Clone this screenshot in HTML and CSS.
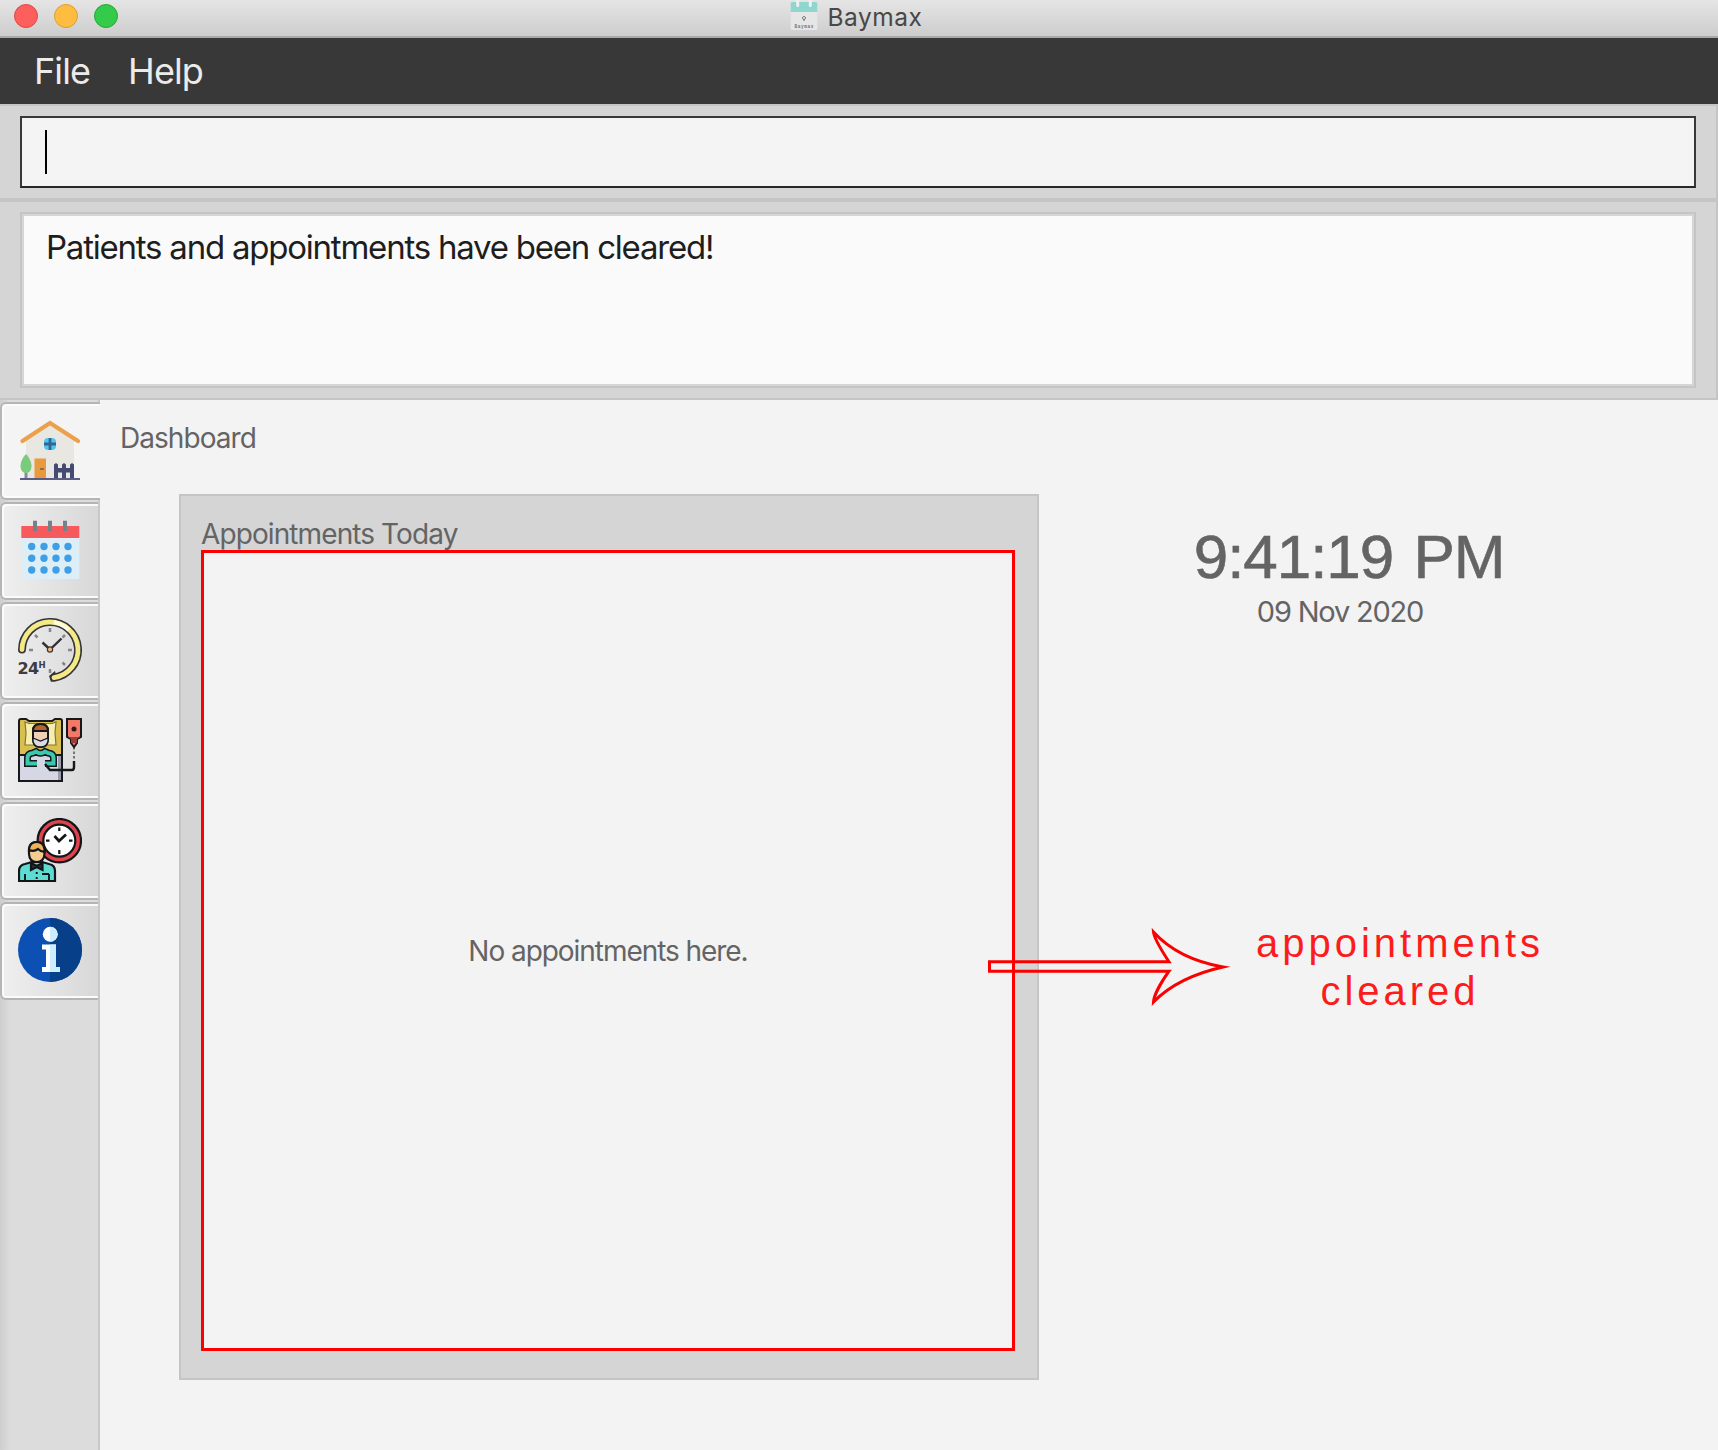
FILE: index.html
```html
<!DOCTYPE html>
<html lang="en">
<head>
<meta charset="utf-8">
<title>Baymax</title>
<link rel="stylesheet" href="styles.css">
</head>
<body>
<div class="window">
  <header class="titlebar">
    <div class="lights"><i class="light close"></i><i class="light minimize"></i><i class="light zoom"></i></div>
    <div class="title">
      <svg class="app-icon" width="28" height="30" viewBox="0 0 28 30">
        <rect x=".7" y="2" width="26.6" height="28" rx="1.5" fill="#e6e6e6"/>
        <path d="M.7 12V3.500Q.7 2 2.200 2H25.800Q27.300 2 27.300 3.500V12z" fill="#8fd6cf"/>
        <path d="M7.700 0V5.500M20.300 0V5.500" stroke="#efefef" stroke-width="3" stroke-linecap="round"/>
        <path d="M14 16.500a1.500 1.500 0 1 1-.1 0M14 19v2" stroke="#666" fill="none"/>
        <text x="14" y="27.500" text-anchor="middle" textLength="19" class="app-icon-text">Baymax</text>
      </svg>
      <span class="title-text">Baymax</span>
    </div>
  </header>
  <nav class="menubar"><span>File</span><span>Help</span></nav>
  <section class="command"><div class="field"><i class="caret"></i></div></section>
  <section class="result"><div class="output">Patients and appointments have been cleared!</div></section>
  <main class="content">
    <aside class="tabs">
      <div class="tab active">
        <svg width="64" height="64" viewBox="0 0 64 64">
          <path d="M8 22L32 6L56 22V60H8z" fill="#e9e7e1"/>
          <path d="M4.500 23L32 5L60 23" fill="none" stroke="#eba14b" stroke-width="4.200" stroke-linecap="round"/>
          <rect x="26" y="20" width="12" height="12" rx="4" fill="#4fc6f2"/>
          <path d="M32 20V32M26 26H38" stroke="#34668f" stroke-width="2.800"/>
          <rect x="16.500" y="40.500" width="11.500" height="20" fill="#e99a3c"/>
          <path d="M22 51H26" stroke="#7a6a58" stroke-width="1.800"/>
          <path d="M8 52V60" stroke="#8a8a9a" stroke-width="3"/>
          <path d="M8 36C11 39 13.500 44 13.500 48C13.500 52.500 11 55 8 55S2.500 52.500 2.500 48C2.500 44 5 39 8 36z" fill="#7acb7c"/>
          <path d="M36 60V46.500L38 45L40 46.500V50H44V46.500L46 45L48 46.500V50H52V46.500L54 45L56 46.500V60H52V54.500H48V60H44V54.500H40V60z" fill="#454a73"/>
          <path d="M2 61H62" stroke="#5a5c86" stroke-width="2"/>
        </svg>
      </div>
      <div class="tab">
        <svg width="64" height="64" viewBox="0 0 64 64">
          <rect x="3.300" y="18" width="58" height="43" rx="1.500" fill="#deeef6"/>
          <rect x="3.300" y="8" width="58" height="12" fill="#f75a5d"/>
          <path d="M17 2.800V13M32 2.800V13M47 2.800V13" stroke="#74808a" stroke-width="4"/>
          <g fill="#3f9fe6"><circle cx="13.700" cy="28.500" r="3.700"/><circle cx="26" cy="28.500" r="3.700"/><circle cx="38" cy="28.500" r="3.700"/><circle cx="50" cy="28.500" r="3.700"/><circle cx="13.700" cy="40.300" r="3.700"/><circle cx="26" cy="40.300" r="3.700"/><circle cx="38" cy="40.300" r="3.700"/><circle cx="50" cy="40.300" r="3.700"/><circle cx="13.700" cy="52" r="3.700"/><circle cx="26" cy="52" r="3.700"/><circle cx="38" cy="52" r="3.700"/><circle cx="50" cy="52" r="3.700"/></g>
        </svg>
      </div>
      <div class="tab">
        <svg width="64" height="64" viewBox="0 0 64 64" fill="none">
          <path d="M4 31.500A28 28 0 1 1 36 59.700" stroke="#34343a" stroke-width="8" stroke-linecap="round"/>
          <path d="M37 53L31 58L33 64L39 61z" fill="#34343a"/>
          <path d="M4 31.500A28 28 0 1 1 36 59.700" stroke="#f3ea86" stroke-width="4.800" stroke-linecap="round"/>
          <path d="M36 4.200A28 28 0 0 1 51 12" stroke="#fffde0" stroke-width="4"/>
          <path d="M32 10V14M50 32H54M11 32H15M17 17L19.500 19.500M47 17L44.500 19.500M47 47L44.500 44.500M32 51V55" stroke="#85858a" stroke-width="2.500"/>
          <path d="M24.500 24.500L32 31.500L43.500 20.500" stroke="#303035" stroke-width="2.400"/>
          <circle cx="32" cy="31.500" r="2.600" fill="#efb98a" stroke="#40352f" stroke-width="1.200"/>
          <text x="-.5" y="55.500" class="hours">24<tspan class="hours-unit" dy="-5.500">H</tspan></text>
        </svg>
      </div>
      <div class="tab">
        <svg width="64" height="64" viewBox="0 0 64 64" fill="none" stroke="#17181c" stroke-width="2">
          <path d="M1 37V3Q1 1 3 1H8L11 3H34L37 1H42Q44 1 44 3V37z" fill="#d9c04e"/>
          <path d="M7 4L11 5.500H34L38 4L37 15L38 27H7L8 15z" fill="#f6eeb0" stroke="#827638" stroke-width="1.200"/>
          <path d="M1 37H44V63H1z" fill="#d5d8e4"/>
          <path d="M40 38H43V62H40z" fill="#989cab" stroke="none"/>
          <path d="M15 13Q15 6 22.500 6T30 13V21Q30 29 22.500 29T15 21z" fill="#eed1b4"/>
          <path d="M15 13Q15 6 22.500 6T30 13z" fill="#b66333"/>
          <path d="M15 20L22.500 23L30 20V23Q29 29 22.500 29T15 23z" fill="#d9dce4" stroke-width="1.300"/>
          <path d="M19 45.500H9.500V40Q9.500 35.500 15 35L18 33.500Q22.500 37 27 33.500L30 35Q35.500 35.500 35.500 40V45.500H27" stroke-width="7"/>
          <path d="M19 45.500H9.500V40Q9.500 35.500 15 35L18 33.500Q22.500 37 27 33.500L30 35Q35.500 35.500 35.500 40V45.500H27" stroke="#3bc8ac" stroke-width="4"/>
          <path d="M27 46L32 52H54Q56 52 56 49V43" stroke-width="2.400"/>
          <path d="M56 29V42" stroke-dasharray="2.500 2" stroke="#73747a"/>
          <path d="M49 1H63V19L59 21V25L56 29L53 25V21L49 19z" fill="#f27868"/>
          <path d="M50 19H62L59 21V25H53V21z" fill="#9b3b3a" stroke="none"/>
          <circle cx="56" cy="11" r="2.500" fill="#32191b" stroke="none"/>
        </svg>
      </div>
      <div class="tab">
        <svg width="64" height="64" viewBox="0 0 64 64" fill="none" stroke="#141518" stroke-width="2.200">
          <circle cx="41.300" cy="22.700" r="21.700" fill="#dd444c"/>
          <circle cx="41.300" cy="22.700" r="16" fill="#fff"/>
          <path d="M41.300 9.500V13M41.300 32V36M28 22.700H31.500M51 22.700H54.500"/>
          <path d="M36.500 18L41 23L48 16.500" stroke-width="2.700"/>
          <path d="M1 63V53Q1 47 7 46L14 44H24L31 46Q37 47 37 53V63z" fill="#5cdcd2"/>
          <path d="M11 32Q11 24 18.700 24T26.500 32V36Q26 44 18.700 44T11 36z" fill="#f4cc91"/>
          <path d="M11 34V31Q12 24 18.700 24T26.500 31V34Q23 34 20 31Q16 34 11 32z" fill="#edb45c"/>
          <path d="M13 45L18.700 48L24.500 45V52L18.700 49L13 52z" fill="#26313a"/>
          <path d="M7 56V63M31 56V63M18.700 54V56M18.700 59V61M24 56H31" stroke-width="1.900"/>
        </svg>
      </div>
      <div class="tab">
        <svg width="64" height="64" viewBox="0 0 64 64">
          <circle cx="32" cy="32" r="32" fill="#0b50b2"/><path d="M32 0A32 32 0 0 1 32 64z" fill="#073f88"/>
          <circle cx="32.300" cy="16.300" r="7.500" fill="#fff"/><path d="M32 8.800A7.500 7.500 0 0 1 32 23.800z" fill="#cdeefe"/>
          <path d="M24 26.500H38V49H42V54H24V49H28V31.500H24z" fill="#fff"/><path d="M32 26.500H38V49H42V54H32z" fill="#cdeefe"/>
        </svg>
      </div>
    </aside>
    <div class="dashboard">
      <h1 class="heading">Dashboard</h1>
      <div class="columns">
        <section class="panel">
          <h2 class="panel-title">Appointments Today</h2>
          <div class="list">No appointments here.</div>
        </section>
        <section class="side">
          <div class="time">9:41:19 PM</div>
          <div class="date">09 Nov 2020</div>
          <p class="note">appointments<br>cleared</p>
        </section>
      </div>
      <svg class="arrow" width="246" height="80" viewBox="0 0 246 80" fill="none" stroke="#fa0000" stroke-width="3">
        <path d="M2.500 33.800H182C175 23 167 11 166.500 4Q191 31 236 39Q191 49 166.500 74C167 67 175 53 182 43.200H2.500z" stroke-miterlimit="8"/>
      </svg>
    </div>
  </main>
</div>
</body>
</html>
```
FILE: styles.css
```css
* { box-sizing: border-box; }
body { margin: 0; font-family: Inter, "Liberation Sans", sans-serif; color: #646464; }
.window { width: 1718px; height: 1450px; display: flex; flex-direction: column; overflow: hidden; background: #f3f3f3; }
.titlebar { height: 38px; flex: none; display: grid; grid-template-columns: 1fr auto 1fr; padding: 0 20px 0 14px; background: linear-gradient(#e5e5e5, #cdcdcd); border-bottom: 2px solid #a9a9a9; }
.lights { display: flex; gap: 16px; padding-top: 4px; }
.light { width: 24px; height: 24px; border-radius: 50%; }
.close { background: #fd605c; border: 1px solid #df4744; }
.minimize { background: #febd40; border: 1px solid #dd9f34; }
.zoom { background: #34cb4b; border: 1px solid #24a934; }
.title { display: flex; gap: 10px; }
.title-text { font-size: 24.500px; line-height: 35px; letter-spacing: .5px; color: #484848; }
.app-icon-text { font: bold 4.500px "Liberation Mono", monospace; fill: #777; }
.menubar { height: 66px; flex: none; display: flex; gap: 38px; padding-left: 34px; background: #383838; color: #ebebeb; font-size: 36px; line-height: 66px; letter-spacing: -.9px; }
.command { height: 96px; flex: none; padding: 10px 20px; background: #d5d5d5; border: 2px solid #c5c5c5; border-left: 0; }
.field { height: 72px; border: 2px solid #383838; border-bottom-color: #272727; background: #f4f4f4; padding: 12px 23px; }
.caret { display: block; width: 2px; height: 44px; background: #000; }
.result { height: 200px; flex: none; padding: 10px 20px; background: #d5d5d5; border: 2px solid #c5c5c5; border-left: 0; }
.output { height: 176px; border: 2px solid #c5c5c5; background: #fafafa; box-shadow: inset 0 0 0 2px #d5d5d5; padding: 13px 24px; font-size: 33px; line-height: 40px; letter-spacing: -1.220px; color: #1e1e1e; }
.command, .result, .field, .output { border-right-width: 2px; }
.command, .result { padding-right: 20px; }
.content { flex: 1; display: flex; }
.tabs { width: 100px; flex: none; padding-top: 2px; display: flex; flex-direction: column; gap: 2px; border-right: 2px solid #c8c8c8; background: linear-gradient(90deg, #cecece, #dcdcdc 10px); }
.tab { height: 98px; flex: none; padding: 14px 0 0 16px; border: 2px solid #b5b5b5; border-right: 0; border-radius: 6px 0 0 6px; background: linear-gradient(90deg, #efefef, #d8d8d8); box-shadow: inset 2px 2px 0 #fbfbfb, inset 0 -2px 0 #fbfbfb; }
.tab.active { margin-right: -2px; background: #f4f4f4; }
.tab svg { display: block; }
.hours { font: bold 16px "DejaVu Sans", sans-serif; fill: #3c3c42; letter-spacing: -.6px; }
.hours-unit { font-size: 8.500px; letter-spacing: 0; }
.dashboard { flex: 1; position: relative; }
.heading { margin: 0; height: 94px; padding: 18px 0 0 20px; font-size: 28px; line-height: 40px; font-weight: 400; letter-spacing: -.950px; }
.columns { display: flex; padding-left: 79px; }
.panel { width: 860px; height: 886px; flex: none; background: #d5d5d5; border: 2px solid #c5c5c5; padding: 20px 22px 0 20px; }
.panel-title { margin: 0; height: 34px; font-size: 28px; line-height: 36px; font-weight: 400; letter-spacing: -.9px; }
.list { height: 801px; border: 3px solid #fa0000; background: #f3f3f3; display: flex; align-items: center; justify-content: center; font-size: 28px; letter-spacing: -1.050px; }
.side { width: 620px; padding-top: 26px; text-align: center; }
.time { font: 62px/74px "Liberation Sans", Arial, sans-serif; letter-spacing: -1.050px; word-spacing: 4px; -webkit-text-stroke: .6px #646464; }
.date { padding-right: 18px; font-size: 29px; line-height: 36px; letter-spacing: -1.200px; }
.note { margin: 289px 0 0 102px; font: 40px/48px "Liberation Sans", Arial, sans-serif; letter-spacing: 4px; color: #fc1c1c; }
.arrow { position: absolute; left: 887px; top: 528px; }
```
